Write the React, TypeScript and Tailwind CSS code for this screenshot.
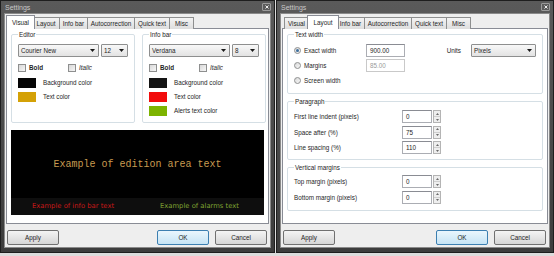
import type { ReactNode } from 'react';

const tabs = [
  { label: 'Visual', w: 'w-[25px]', ws: 'w-[29px]' },
  { label: 'Layout', w: 'w-[28px]', ws: 'w-[32px]' },
  { label: 'Info bar', w: 'w-[29px]', ws: 'w-[33px]' },
  { label: 'Autocorrection', w: 'w-[48px]', ws: 'w-[52px]' },
  { label: 'Quick text', w: 'w-[36px]', ws: 'w-[40px]' },
  { label: 'Misc', w: 'w-[25px]', ws: 'w-[29px]' },
];

function Arrow() {
  return (
    <svg width="5" height="3" viewBox="0 0 5 3" className="shrink-0">
      <path d="M0 0h5L2.5 3z" fill="#1a1a1a" />
    </svg>
  );
}

function Select({ value, className }: { value: string; className: string }) {
  return (
    <div
      className={`flex h-[13px] items-center justify-between rounded-[1px] border border-[#8e8f8f] bg-gradient-to-b from-[#f8f8f8] to-[#e3e3e3] pl-[2px] pr-[3px] ${className}`}
    >
      <span>{value}</span>
      <Arrow />
    </div>
  );
}

function Check() {
  return <div className="h-[8px] w-[8px] shrink-0 border border-[#8e8f8f] bg-gradient-to-br from-[#d8d8d8] to-[#f6f6f6]" />;
}

function Radio({ checked }: { checked?: boolean }) {
  return (
    <div className="flex h-[7px] w-[7px] shrink-0 items-center justify-center rounded-full border border-[#8e8f8f] bg-gradient-to-br from-[#dadada] to-[#f7f7f7]">
      {checked && <div className="h-[3px] w-[3px] rounded-full bg-[#3d6e9c]" />}
    </div>
  );
}

function Input({ value, className, disabled }: { value: string; className: string; disabled?: boolean }) {
  return (
    <div
      className={`flex h-[13px] items-center border pl-[3px] ${
        disabled ? 'border-[#c9c9c9] bg-white text-[#9a9a9a]' : 'border-[#abadb3] border-t-[#8a8c93] bg-white'
      } ${className}`}
    >
      {value}
    </div>
  );
}

function Spinner() {
  return (
    <div className="ml-[1px] flex h-[13px] w-[8px] flex-col border border-[#b4b4b4] bg-[#eeeeee]">
      <div className="flex flex-1 items-center justify-center border-b border-[#cfcfcf]">
        <svg width="3" height="2" viewBox="0 0 3 2">
          <path d="M0 2h3L1.5 0z" fill="#6a6a6a" />
        </svg>
      </div>
      <div className="flex flex-1 items-center justify-center">
        <svg width="3" height="2" viewBox="0 0 3 2">
          <path d="M0 0h3L1.5 2z" fill="#6a6a6a" />
        </svg>
      </div>
    </div>
  );
}

function Swatch({ color, label }: { color: string; label: string }) {
  return (
    <div className="flex h-[14px] items-start">
      <div className={`h-[10px] w-[18px] shrink-0 ${color}`} />
      <span className="ml-[7px] leading-[10px]">{label}</span>
    </div>
  );
}

function Group({ title, className, children }: { title: string; className: string; children: ReactNode }) {
  return (
    <fieldset className={`rounded-[2px] border border-[#d5dfe5] px-[6px] ${className}`}>
      <legend className="px-[1px] leading-[7px]">{title}</legend>
      {children}
    </fieldset>
  );
}

function Button({ children, primary, className }: { children: ReactNode; primary?: boolean; className?: string }) {
  return (
    <div
      className={`flex h-[15px] w-[52px] items-center justify-center rounded-[2px] border ${
        primary
          ? 'border-[#3c7fb1] bg-gradient-to-b from-[#eaf6fd] to-[#c6e4f5]'
          : 'border-[#707070] bg-gradient-to-b from-[#f4f4f4] to-[#d6d6d6]'
      } ${className ?? ''}`}
    >
      {children}
    </div>
  );
}

function Window({ active, className, children }: { active: number; className: string; children: ReactNode }) {
  return (
    <div className={`flex h-[253px] flex-col border border-[#1e1e1e] bg-gradient-to-b from-[#5a5a5a] to-[#3c3c3c] ${className}`}>
      <div className="flex h-[12px] shrink-0 items-center justify-between pl-[4px] pr-[3px]">
        <span className="text-[7px] leading-none text-[#c8c8c8]">Settings</span>
        <div className="flex h-[8px] w-[9px] items-center justify-center rounded-[1px] border border-[#9a9a9a] bg-[#5c5c5c]">
          <svg width="4" height="4" viewBox="0 0 4 4">
            <path d="M0.5 0.5l3 3M3.5 0.5l-3 3" stroke="#eeeeee" strokeWidth="1" />
          </svg>
        </div>
      </div>
      <div className="mx-[3px] mb-[4px] flex flex-1 flex-col border border-[#8a8a8a] bg-[#eeeeee] px-[1px] pt-[1px]">
        <div className="relative z-10 flex h-[14px] items-end pl-[2px]">
          {tabs.map((t, i) =>
            i === active ? (
              <div
                key={t.label}
                className={`relative z-10 -mx-[2px] flex h-[14px] items-start justify-center border border-b-0 border-[#898c95] bg-white pt-[2px] ${t.ws}`}
              >
                {t.label}
              </div>
            ) : (
              <div
                key={t.label}
                className={`-ml-[1px] flex h-[12px] items-center justify-center border border-b-0 border-[#8e8f8f] bg-gradient-to-b from-[#f3f3f3] to-[#dedede] first:ml-0 ${t.w}`}
              >
                {t.label}
              </div>
            )
          )}
        </div>
        <div className="-mt-[1px] flex h-[196px] flex-col border border-[#898c95] bg-white px-[4px] pt-[2px]">
          {children}
        </div>
        <div className="mt-[6px] flex pl-[1px] pr-[2px]">
          <Button>Apply</Button>
          <Button primary className="ml-auto">
            OK
          </Button>
          <Button className="ml-[6px]">Cancel</Button>
        </div>
      </div>
    </div>
  );
}

export default function App() {
  return (
    <div className="flex h-[256px] w-[554px] gap-[1px] overflow-hidden bg-[#dcdcdc] font-['Liberation_Sans',Arial,sans-serif] text-[6.3px] text-[#1e1e1e]">
      {/* Visual tab */}
      <Window active={0} className="w-[275px]">
        <div className="flex gap-[7px]">
          <Group title="Editor" className="h-[92px] w-[123px]">
            <div className="mt-[6px] flex gap-[2px]">
              <Select value="Courier New" className="w-[81px]" />
              <Select value="12" className="w-[27px]" />
            </div>
            <div className="mt-[7px] flex h-[8px] items-center">
              <Check />
              <span className="ml-[3px] w-[39px] font-bold">Bold</span>
              <Check />
              <span className="ml-[3px] italic">Italic</span>
            </div>
            <div className="mt-[6px] flex flex-col">
              <Swatch color="bg-[#050505]" label="Background color" />
              <Swatch color="bg-[#d4a106]" label="Text color" />
            </div>
          </Group>
          <Group title="Info bar" className="h-[92px] w-[124px]">
            <div className="mt-[6px] flex gap-[2px]">
              <Select value="Verdana" className="w-[81px]" />
              <Select value="8" className="w-[27px]" />
            </div>
            <div className="mt-[7px] flex h-[8px] items-center">
              <Check />
              <span className="ml-[3px] w-[39px] font-bold">Bold</span>
              <Check />
              <span className="ml-[3px] italic">Italic</span>
            </div>
            <div className="mt-[6px] flex flex-col">
              <Swatch color="bg-[#141414]" label="Background color" />
              <Swatch color="bg-[#f20c0c]" label="Text color" />
              <Swatch color="bg-[#7cb300]" label="Alerts text color" />
            </div>
          </Group>
        </div>
        <div className="mt-[7px] flex h-[85px] flex-col bg-black">
          <div className="flex flex-1 items-center justify-center font-['Liberation_Mono','Courier_New',monospace] text-[10px] text-[#c89b50]">
            Example of edition area text
          </div>
          <div className="flex h-[17px] items-center bg-[#0e0e0e] font-['DejaVu_Sans',Verdana,sans-serif] text-[6.8px]">
            <span className="w-[149px] pl-[21px] text-[#c81818]">Example of info bar text</span>
            <span className="text-[#7fa232]">Example of alarms text</span>
          </div>
        </div>
      </Window>

      {/* Layout tab */}
      <Window active={1} className="w-[278px]">
        <Group title="Text width" className="h-[63px] w-full">
          <div className="mt-[5px] flex flex-col">
            <div className="flex h-[15px] items-center">
              <Radio checked />
              <span className="ml-[3px] w-[62px]">Exact width</span>
              <Input value="900.00" className="w-[39px]" />
              <span className="ml-auto mr-[10px]">Units</span>
              <Select value="Pixels" className="w-[65px]" />
            </div>
            <div className="flex h-[15px] items-center">
              <Radio />
              <span className="ml-[3px] w-[62px]">Margins</span>
              <Input value="85.00" className="w-[39px]" disabled />
            </div>
            <div className="flex h-[15px] items-center">
              <Radio />
              <span className="ml-[3px]">Screen width</span>
            </div>
          </div>
        </Group>
        <Group title="Paragraph" className="mt-[4px] h-[62px] w-full">
          <div className="mt-[4px] flex flex-col">
            {[
              ['First line indent (pixels)', '0'],
              ['Space after (%)', '75'],
              ['Line spacing (%)', '110'],
            ].map(([label, v]) => (
              <div key={label} className="flex h-[15.5px] items-center">
                <span className="w-[108px]">{label}</span>
                <Input value={v} className="w-[30px]" />
                <Spinner />
              </div>
            ))}
          </div>
        </Group>
        <Group title="Vertical margins" className="mt-[4px] h-[47px] w-full">
          <div className="mt-[3px] flex flex-col">
            {[
              ['Top margin (pixels)', '0'],
              ['Bottom margin (pixels)', '0'],
            ].map(([label, v]) => (
              <div key={label} className="flex h-[15.5px] items-center">
                <span className="w-[108px]">{label}</span>
                <Input value={v} className="w-[30px]" />
                <Spinner />
              </div>
            ))}
          </div>
        </Group>
      </Window>
    </div>
  );
}
